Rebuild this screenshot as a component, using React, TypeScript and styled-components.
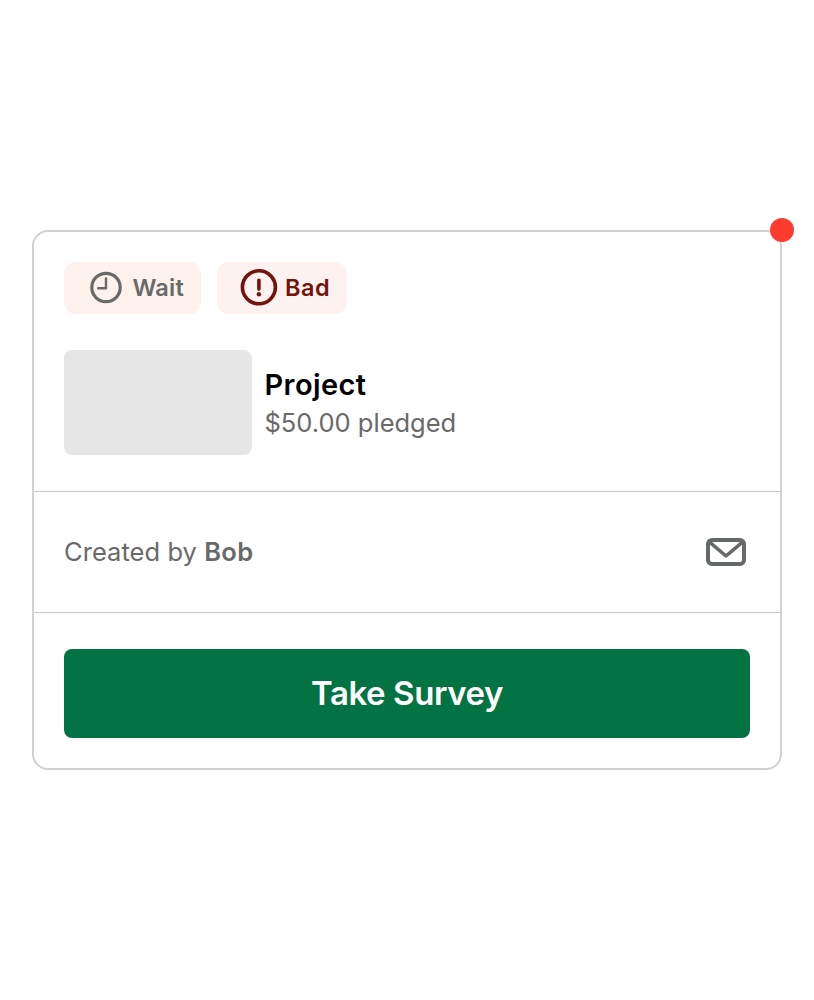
import React from "react";
import styled, { createGlobalStyle } from "styled-components";

const GlobalStyle = createGlobalStyle`
  * { box-sizing: border-box; }
  body {
    margin: 0;
    background: #ffffff;
    font-family: Inter, "Liberation Sans", sans-serif;
  }
`;

const Page = styled.main`
  min-height: 1000px;
  padding: 0 32px;
  display: flex;
  align-items: center;
`;

const Card = styled.article`
  position: relative;
  width: 750px;
  height: 540px;
  display: flex;
  flex-direction: column;
  border: 2px solid #d1d1d1;
  border-radius: 16px;
  background: #ffffff;
`;

const AlertDot = styled.span`
  position: absolute;
  top: -14px;
  right: -14px;
  width: 24px;
  height: 24px;
  border-radius: 50%;
  background: #ff3b30;
`;

const Summary = styled.section`
  height: 260px;
  padding: 30px 30px 36px;
  display: flex;
  flex-direction: column;
  gap: 36px;
  border-bottom: 1px solid #c8c8c8;
`;

const Badges = styled.div`
  display: flex;
  gap: 16px;
`;

const Badge = styled.div<{ $tone: "wait" | "bad" }>`
  width: ${(p) => (p.$tone === "wait" ? 137 : 130)}px;
  height: 52px;
  padding-left: ${(p) => (p.$tone === "wait" ? 26 : 23)}px;
  display: flex;
  align-items: center;
  gap: ${(p) => (p.$tone === "wait" ? 10.5 : 7)}px;
  border-radius: 12px;
  background: ${(p) => (p.$tone === "wait" ? "#fff2ec" : "#fef2f1")};
  color: ${(p) => (p.$tone === "wait" ? "#696969" : "#73140d")};
  svg { flex: none; overflow: visible; }
  span { padding-bottom: 2px; }
`;

const Text = styled.span<{ $size: number; $weight?: number; $track?: number }>`
  font-size: ${(p) => p.$size}px;
  font-weight: ${(p) => p.$weight ?? 400};
  letter-spacing: ${(p) => p.$track ?? 0}px;
  white-space: nowrap;
`;

const Project = styled.div`
  display: flex;
  align-items: center;
  gap: 12.5px;
`;

const Thumbnail = styled.div`
  width: 188px;
  height: 105px;
  border-radius: 8px;
  background: #e6e6e6;
`;

const ProjectInfo = styled.div`
  display: flex;
  flex-direction: column;
  padding-top: 2px;
  line-height: 38px;
  color: #696969;
`;

const Title = styled(Text)`
  color: #000000;
`;

const Creator = styled.section`
  height: 121px;
  padding: 0 34px 0 30px;
  display: flex;
  align-items: center;
  justify-content: space-between;
  border-bottom: 1px solid #c8c8c8;
  color: #696969;
`;

const CreatorName = styled(Text)`
  padding-bottom: 2px;
`;

const Actions = styled.footer`
  padding: 36px 30px 30px;
`;

const SurveyButton = styled.button`
  width: 100%;
  height: 89px;
  padding: 0 0 2px;
  border: 0;
  border-radius: 8px;
  background: #037344;
  color: #ffffff;
  font-family: inherit;
`;

const ClockIcon = () => (
  <svg width="32" height="32" viewBox="0 0 32 32" fill="none" stroke="currentColor">
    <circle cx="16" cy="15.5" r="14.2" strokeWidth="3.2" />
    <path d="M16 6.4V16.3H8.2" strokeWidth="2.4" strokeLinecap="round" strokeLinejoin="round" />
  </svg>
);

const WarningIcon = () => (
  <svg width="38" height="38" viewBox="0 0 38 38" fill="none" stroke="currentColor">
    <circle cx="18.9" cy="18.3" r="16.5" strokeWidth="3.6" />
    <path d="M18.9 11.3V20.1" strokeWidth="3.6" strokeLinecap="round" />
    <circle cx="18.9" cy="25.3" r="2.2" fill="currentColor" stroke="none" />
  </svg>
);

const MailIcon = () => (
  <svg width="40" height="28" viewBox="0 0 40 28" fill="none" stroke="#656969" strokeWidth="4">
    <rect x="2" y="2" width="36" height="24" rx="4" />
    <path d="M3 3.6L20 18L37 3.6" strokeWidth="3.6" strokeLinejoin="round" />
  </svg>
);

export default function App() {
  return (
    <>
      <GlobalStyle />
      <Page>
        <Card>
          <AlertDot />
          <Summary>
            <Badges>
              <Badge $tone="wait">
                <ClockIcon />
                <Text $size={23.5} $weight={600} $track={0.2}>Wait</Text>
              </Badge>
              <Badge $tone="bad">
                <WarningIcon />
                <Text $size={23.5} $weight={600} $track={0.5}>Bad</Text>
              </Badge>
            </Badges>
            <Project>
              <Thumbnail />
              <ProjectInfo>
                <Title $size={29} $weight={600} $track={0.4}>Project</Title>
                <Text $size={25.5}>$50.00 pledged</Text>
              </ProjectInfo>
            </Project>
          </Summary>
          <Creator>
            <CreatorName $size={25.5} $track={0.05}>
              Created by <Text $size={25.5} $weight={600} $track={0.4}>Bob</Text>
            </CreatorName>
            <MailIcon />
          </Creator>
          <Actions>
            <SurveyButton>
              <Text $size={33} $weight={600} $track={-0.4}>Take Survey</Text>
            </SurveyButton>
          </Actions>
        </Card>
      </Page>
    </>
  );
}
